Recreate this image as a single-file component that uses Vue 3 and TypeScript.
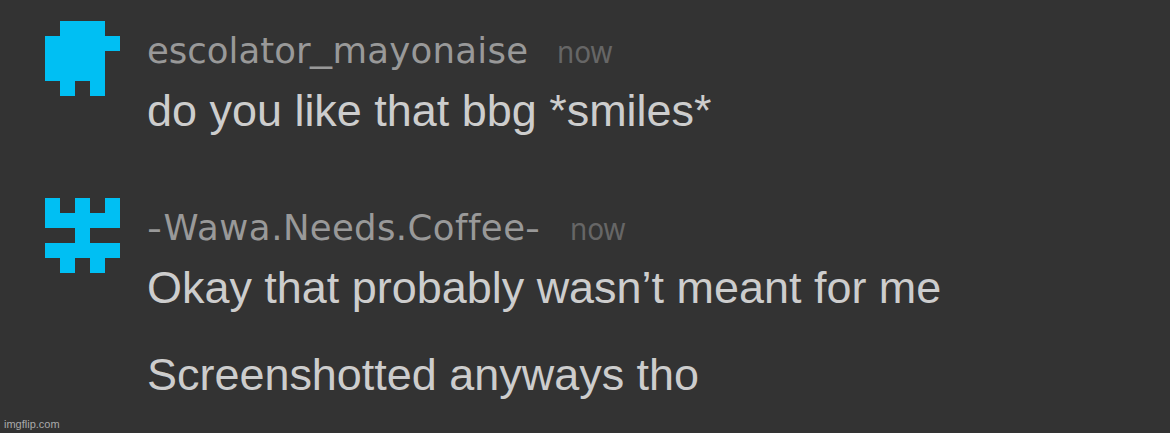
<script setup lang="ts">
interface NamePart {
  text: string
  x: number
  y: number
  width: number
}

interface Comment {
  id: number
  kind: string
  name: NamePart[]
  time: string
  icon: string
  lines: string[]
}

const comments: Comment[] = [
  {
    id: 1,
    kind: 'first',
    name: [
      { text: 'escolator', x: 0, y: 32, width: 163.5 },
      { text: '_', x: 163, y: 30, width: 22 },
      { text: 'mayonaise', x: 185.5, y: 32, width: 195.5 },
    ],
    time: 'now',
    icon: 'M1 0H4V1H5V2H4V5H3V4H2V5H1V4H0V1H1Z',
    lines: ['do you like that bbg *smiles*'],
  },
  {
    id: 2,
    kind: 'second',
    name: [
      { text: '-', x: 0, y: 32, width: 15 },
      { text: 'Wawa.', x: 16.5, y: 32, width: 119 },
      { text: 'Needs.', x: 136, y: 32, width: 124 },
      { text: 'Coffee', x: 260.5, y: 32, width: 117.5 },
      { text: '-', x: 378, y: 32, width: 15 },
    ],
    time: 'now',
    icon: 'M0 0H1V1H2V0H3V1H4V0H5V2H3V3H5V4H4V5H3V4H2V5H1V4H0V3H2V2H0Z',
    lines: ['Okay that probably wasn’t meant for me', 'Screenshotted anyways tho'],
  },
]
</script>

<template>
  <main class="thread">
    <article v-for="c in comments" :key="c.id" class="comment" :class="c.kind">
      <svg class="avatar" viewBox="0 0 5 5" shape-rendering="crispEdges"><path :d="c.icon" /></svg>
      <div class="content">
        <header class="meta">
          <svg class="user" height="44">
            <text
              v-for="(p, i) in c.name"
              :key="i"
              :x="p.x"
              :y="p.y"
              :textLength="p.width"
              :lengthAdjust="p.text.length === 1 ? 'spacingAndGlyphs' : 'spacing'"
            >{{ p.text }}</text>
          </svg>
          <svg class="time" width="60" height="44">
            <text x="0" y="32" textLength="55.5" lengthAdjust="spacingAndGlyphs">{{ c.time }}</text>
          </svg>
        </header>
        <p v-for="line in c.lines" :key="line" class="line">{{ line }}</p>
      </div>
    </article>
    <footer class="mark">imgflip.com</footer>
  </main>
</template>

<style>
body { margin: 0; background: #333; }
</style>

<style scoped>
.thread { position: relative; width: 1170px; height: 433px; box-sizing: border-box; padding: 21px 0 0 45px; background: #333; overflow: hidden; }
.comment { display: flex; gap: 27px; height: 177px; }
.second { height: 220px; }
.avatar { width: 75px; height: 75px; flex: none; fill: #00bff3; }
.content { padding-top: 10px; }
.meta { display: flex; height: 44px; }
.user { flex: none; font: 35.5px "DejaVu Sans", sans-serif; font-variant-ligatures: none; fill: #999; overflow: visible; }
.first .user { width: 410px; }
.second .user { width: 422.5px; }
.time { flex: none; font: 30px "Noto Sans", sans-serif; fill: #666; overflow: visible; }
.line { margin: 0 0 37px; height: 50px; font: 44.95px/71px "Liberation Sans", sans-serif; color: #cdcdcd; white-space: nowrap; }
.mark { position: absolute; left: 4px; bottom: 2px; font: 11px/13px "Liberation Sans", sans-serif; color: #aaa; }
</style>
